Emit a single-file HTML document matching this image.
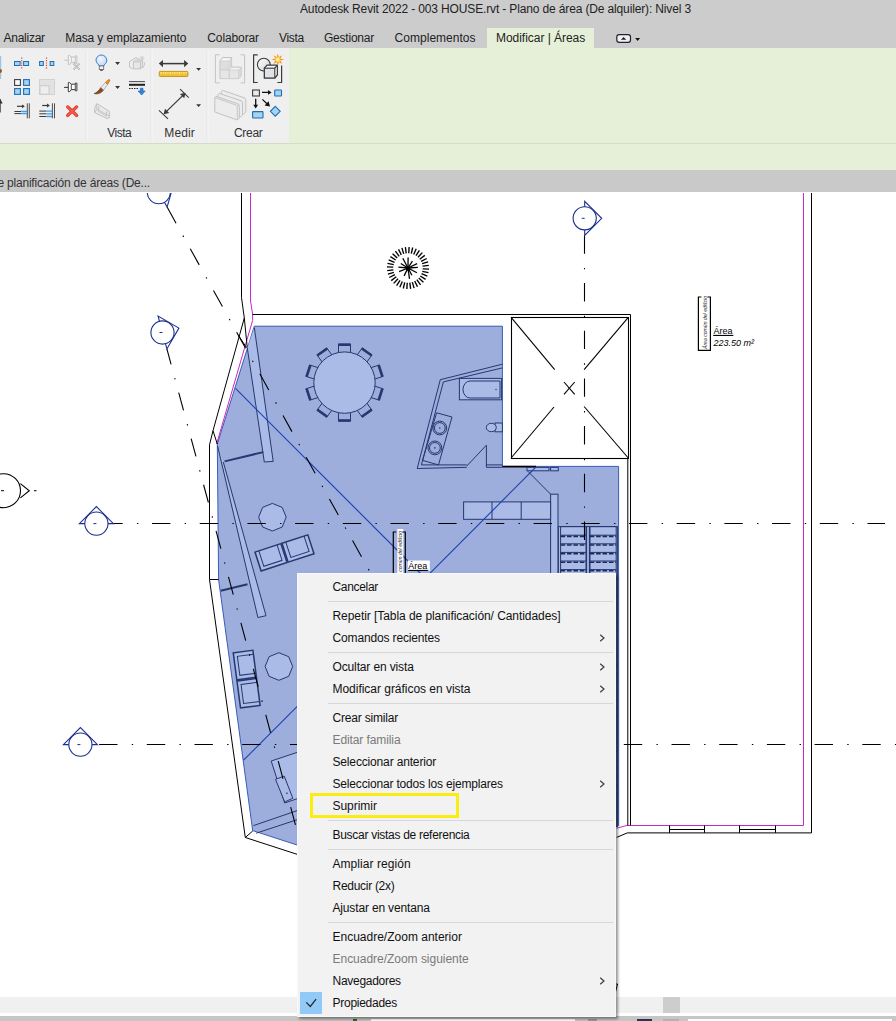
<!DOCTYPE html>
<html><head><meta charset="utf-8"><title>Autodesk Revit 2022</title>
<style>
*{margin:0;padding:0;box-sizing:border-box}
html,body{width:896px;height:1021px;overflow:hidden;background:#fff;font-family:"Liberation Sans",sans-serif;color:#1e1e1e}
#app{position:relative;width:896px;height:1021px;overflow:hidden;background:#fff}
.abs{position:absolute}
#titlebar{left:0;top:0;width:896px;height:48px;background:#cccccc}
#title{left:300px;top:1px;width:392px;height:16px;font-size:12px;line-height:16px;white-space:nowrap;color:#222}
.tab{position:absolute;top:29px;height:18px;line-height:18px;font-size:12px;white-space:nowrap;color:#222}
#acttab{left:487px;top:28px;width:107px;height:20px;background:#e6f0d8}
#ribbon{left:0;top:48px;width:896px;height:122px;background:#e6f0d8}
#panel{left:0;top:48px;width:289px;height:95px;background:#efefef}
#ribline{left:0;top:143px;width:896px;height:1px;background:#d3dcc6}
#viewtabs{left:0;top:170px;width:896px;height:21.6px;background:#c9c9c9}
#viewtab{top:173.6px;font-size:12px;line-height:18px;white-space:nowrap;color:#333}
.plabel{position:absolute;top:125px;white-space:nowrap;font-size:12px;line-height:16px;color:#333}
#canvas{left:0;top:191.6px;width:896px;height:806px;background:#fff}
#hscroll{left:0;top:997px;width:896px;height:15.8px;background:#f0f0f0}
#thumb{left:663px;top:997px;width:17px;height:15.8px;background:#cdcdcd}
#status{left:0;top:1015.5px;width:896px;height:6px;background:#c6c6c6}
#menu{left:297px;top:573px;width:319px;height:443.7px;background:#f2f2f2;border:1px solid #f9f9f9;box-shadow:2px 2px 2.5px rgba(0,0,0,.42)}
.mi{position:absolute;left:34.5px;height:22px;line-height:22px;font-size:12px;white-space:nowrap;color:#111}
.mi.dis{color:#7a7a7a}
.sep{position:absolute;left:30px;width:284.5px;height:1px;background:#d7d7d7}
.arr{position:absolute;left:300px;width:8px;height:10px}
</style></head><body><div id="app">
<div id="titlebar" class="abs"></div>
<div id="acttab" class="abs"></div>
<svg class="abs" style="left:612px;top:30px" width="32" height="16" viewBox="612 30 32 16"><rect x="616.8" y="34.7" width="13.7" height="7.6" rx="2.4" fill="#eef1f7" stroke="#222" stroke-width="1.2"/><path d="M620.9 39.7 L623.6 37 L626.3 39.7 Z" fill="#222"/><path d="M635.2 38.1 H640.1 L637.65 40.9 Z" fill="#111"/></svg>
<div id="ribbon" class="abs"></div>
<div id="panel" class="abs"></div>
<div id="ribline" class="abs"></div>
<svg class="abs" style="left:0;top:48px" width="290" height="95" viewBox="0 48 290 95" font-family="Liberation Sans, sans-serif">
<rect x="85.5" y="50" width="1" height="91" fill="#e4e4e4"/><rect x="86.5" y="50" width="1" height="91" fill="#f7f7f7"/>
<rect x="150.5" y="50" width="1" height="91" fill="#e4e4e4"/><rect x="151.5" y="50" width="1" height="91" fill="#f7f7f7"/>
<rect x="206.5" y="50" width="1" height="91" fill="#e4e4e4"/><rect x="207.5" y="50" width="1" height="91" fill="#f7f7f7"/>
<rect x="0" y="56" width="1.2" height="23" fill="#9cc4e8"/>
<circle cx="0" cy="71" r="2" fill="#9a5a0a"/>
<path d="M0 112.5 V99.5" stroke="#333" stroke-width="1.4" fill="none"/><path d="M0 98.6 L2.7 103.4 H0 Z" fill="#333"/>
<g transform="translate(14,55)">
<rect x="0.5" y="6.5" width="5.6" height="4" fill="#a5d3f3" stroke="#1f6fb5" stroke-width="1"/>
<rect x="9.6" y="6.5" width="5" height="4" fill="#a5d3f3" stroke="#1f6fb5" stroke-width="1"/>
<line x1="7.7" y1="2.6" x2="7.7" y2="14" stroke="#e0442f" stroke-width="1.2" stroke-dasharray="1.2 1.2"/>
</g>
<g transform="translate(39,55)">
<rect x="0.6" y="6.5" width="3.7" height="4" fill="#a5d3f3" stroke="#1f6fb5" stroke-width="1"/>
<rect x="11.1" y="6.5" width="3.7" height="4" fill="#a5d3f3" stroke="#1f6fb5" stroke-width="1"/>
<line x1="7.5" y1="2.6" x2="7.5" y2="14" stroke="#e0442f" stroke-width="1.2" stroke-dasharray="1.2 1.2"/>
</g>
<g transform="translate(64,51.8)">
<path d="M0.3 8.4 H4.1" stroke="#c2c2c2" stroke-width="1" fill="none"/>
<path d="M4.3 3.6 H5.7 L7.3 5.2 H11.3 V4.1 H12.9 V11.75 H11.3 V10.6 H7.3 L5.7 12.7 H4.3 Z" fill="#f1f1f1" stroke="#c2c2c2" stroke-width="1" stroke-linejoin="round"/>
<path d="M7.3 5.2 V10.6 M11.3 5.2 V10.6" stroke="#c2c2c2" stroke-width="0.9" fill="none"/>
</g>
<g transform="translate(64,55)">
<path d="M9.6 8.6 L15.5 14.5 M15.5 8.6 L9.6 14.5" stroke="#b4b4b4" stroke-width="2" fill="none" stroke-dasharray="1.2 0.6"/>
</g>
<g transform="translate(14,79)">
<rect x="0.6" y="0.6" width="5.8" height="5.8" fill="#fff" stroke="#3b3b3b" stroke-width="1.1"/>
<rect x="9.6" y="0.6" width="5.8" height="5.8" fill="#a5d3f3" stroke="#1f6fb5" stroke-width="1.1"/>
<rect x="0.6" y="9.6" width="5.8" height="5.8" fill="#a5d3f3" stroke="#1f6fb5" stroke-width="1.1"/>
<rect x="9.6" y="9.6" width="5.8" height="5.8" fill="#a5d3f3" stroke="#1f6fb5" stroke-width="1.1"/>
</g>
<g transform="translate(39,79)">
<rect x="0.5" y="0.5" width="15" height="15" fill="#e2e2e2" stroke="#d2d2d2" stroke-width="1"/>
<rect x="1" y="6.8" width="9" height="8.4" fill="#efefef" stroke="#c9c9c9" stroke-width="1"/>
</g>
<g transform="translate(64,79)">
<path d="M0.1 8.4 H4.1" stroke="#3b3b3b" stroke-width="1.1" fill="none"/>
<path d="M4.3 3.6 H5.7 L7.3 5.2 H11.3 V4.1 H12.9 V11.75 H11.3 V10.6 H7.3 L5.7 12.7 H4.3 Z" fill="#fdfdfd" stroke="#3b3b3b" stroke-width="1" stroke-linejoin="round"/>
<path d="M7.3 5.2 V10.6 M11.3 5.2 V10.6" stroke="#3b3b3b" stroke-width="0.9" fill="none"/>
</g>
<g transform="translate(14,103)">
<path d="M3 3.3 H10" stroke="#3b3b3b" stroke-width="1.2" fill="none"/><path d="M8 1.4 L10.8 3.3 L8 5.2 Z" fill="#3b3b3b"/>
<path d="M13.3 0.3 V15.3 M15.3 0.3 V15.3" stroke="#3b3b3b" stroke-width="0.9" fill="none"/>
<path d="M0.4 8.5 H7.2 M0.4 10.6 H7.2" stroke="#3b3b3b" stroke-width="1" fill="none"/>
<path d="M7.2 8.5 H13 M7.2 10.6 H13" stroke="#3f9fea" stroke-width="1.3" fill="none"/>
</g>
<g transform="translate(39,103)">
<path d="M3.2 2.5 H10" stroke="#3b3b3b" stroke-width="1.2" fill="none"/><path d="M8 0.6 L10.8 2.5 L8 4.4 Z" fill="#3b3b3b"/>
<path d="M13.4 0.3 V15.3 M15.5 0.3 V15.3" stroke="#3b3b3b" stroke-width="0.9" fill="none"/>
<path d="M0.3 8.1 H7.4 M0.3 10.8 H7.4 M0.3 13.5 H7.4" stroke="#3b3b3b" stroke-width="1" fill="none"/>
<path d="M7.4 8.1 H13.1 M7.4 10.8 H13.1 M7.4 13.5 H13.1" stroke="#3f9fea" stroke-width="1.3" fill="none"/>
</g>
<g transform="translate(64,103)">
<path d="M3.7 3.9 L12.6 12.4 M12.6 3.9 L3.7 12.4" stroke="#c8301f" stroke-width="3.3" stroke-linecap="round" fill="none"/>
<path d="M3.7 3.9 L12.6 12.4 M12.6 3.9 L3.7 12.4" stroke="#f7574a" stroke-width="2.1" stroke-linecap="round" fill="none"/>
</g>
<g transform="translate(93,55)">
<defs><radialGradient id="bg" cx="40%" cy="35%" r="70%"><stop offset="0" stop-color="#f4f9ff"/><stop offset="1" stop-color="#bcd6f5"/></radialGradient></defs>
<path d="M6.2 11 C6.2 9.5 3 8.3 3 5.4 A5.4 5.4 0 0 1 13.8 5.4 C13.8 8.3 10.7 9.5 10.7 11 Z" fill="url(#bg)" stroke="#3b78cf" stroke-width="1"/>
<rect x="6.3" y="11" width="4.4" height="3.4" fill="#f2f2f2" stroke="#666" stroke-width="0.8"/>
<path d="M6.8 14.8 H10.2 L9.6 15.8 H7.4 Z" fill="#333"/>
</g>
<path d="M115.1 62 H120 L117.55 65 Z" fill="#333"/>
<path d="M115.1 86 H120 L117.55 89 Z" fill="#333"/>
<g transform="translate(129,55)">
<path d="M0.5 6.5 L7 2.5 L11 5 M0.5 6.5 V12 L3.5 13.8 M15.3 7 V10.5 L13.5 13" fill="none" stroke="#c2c2c2" stroke-width="1"/>
<rect x="4.3" y="6.8" width="7.3" height="7" fill="#e6e6e6" stroke="#c2c2c2" stroke-width="1"/>
<path d="M4.3 6.8 L6.3 5 H13.4 L11.6 6.8 M13.4 5 V11.8 L11.6 13.8" fill="none" stroke="#c2c2c2" stroke-width="1"/>
<path d="M13 0.6 V5.4 M10.6 3 H15.4 M11.3 1.3 L14.7 4.7 M14.7 1.3 L11.3 4.7" fill="none" stroke="#cfcfcf" stroke-width="0.9"/>
</g>
<g transform="translate(94,79)">
<path d="M0 14.5 C2.6 14 5 11.5 6.8 8.6 L9.6 10.8 C7.6 14.4 3.4 15.6 0 14.5 Z" fill="#8a4a1c" stroke="#6b3410" stroke-width="0.6"/>
<path d="M6.8 8.6 L11.4 3.4 L13.6 5.4 L9.6 10.9 Z" fill="#ececec" stroke="#8c8c8c" stroke-width="0.6"/>
<path d="M11.4 3.4 L14.3 0.7 C15.3 0 16.4 1 15.7 2.1 L13.6 5.4 Z" fill="#ea8d23" stroke="#b5630f" stroke-width="0.6"/>
</g>
<g transform="translate(129,80)">
<path d="M0 1.6 H16" stroke="#3b3b3b" stroke-width="0.9"/><path d="M0 4.8 H16" stroke="#222" stroke-width="2"/><path d="M0 8.5 H10" stroke="#222" stroke-width="1" stroke-dasharray="1.5 1"/>
<path d="M11.3 8.2 H14 V11 H16.2 L12.65 15 L9.1 11 H11.3 Z" fill="#2b86e0" stroke="#1661b5" stroke-width="0.6"/>
</g>
<g transform="translate(94,103)">
<path d="M0.6 5.2 L2.8 0.6 L15.4 8.3 V14.6 L13 15.6 L0.6 9.6 Z" fill="#e9e9e9" stroke="#c2c2c2" stroke-width="1"/>
<path d="M2.8 0.6 V6.2 L0.6 9.6 M2.8 6.2 L15.4 13 M4.6 3.4 V8.6 L12.6 13.2 V8.4" fill="none" stroke="#c2c2c2" stroke-width="0.9"/>
</g>
<path d="M161 63.6 H186" stroke="#3b3b3b" stroke-width="1.5" fill="none"/>
<path d="M158.8 63.6 L163 60 V67.2 Z M188.3 63.6 L184.1 60 V67.2 Z" fill="#3b3b3b"/>
<rect x="159.3" y="71.4" width="28.6" height="5" rx="0.8" fill="#f3c532" stroke="#c3931a" stroke-width="1"/>
<path d="M161 71.9 V74 M163.3 71.9 V73.2 M165.6 71.9 V74 M167.9 71.9 V73.2 M170.2 71.9 V74 M172.5 71.9 V73.2 M174.8 71.9 V74 M177.1 71.9 V73.2 M179.4 71.9 V74 M181.7 71.9 V73.2 M184 71.9 V74 M186.3 71.9 V73.2" stroke="#fbe9a8" stroke-width="1" fill="none"/>
<path d="M196.2 68.1 H201 L198.6 70.8 Z" fill="#333"/>
<path d="M196.2 104.2 H201 L198.6 106.9 Z" fill="#333"/>
<path d="M165.2 112.6 L184 94.4" stroke="#3b3b3b" stroke-width="1.3" fill="none"/>
<path d="M159 110.3 L168 118.8 M180.1 89.2 L188.7 97.7" stroke="#3b3b3b" stroke-width="1.1" fill="none"/>
<path d="M163.6 114.2 L165 108.8 L169.2 113 Z M185.6 92.8 L184.2 98.2 L180 94 Z" fill="#3b3b3b"/>
<path d="M219.6 54.8 H215.4 V82.9 H219.6 M240.6 54.8 H244.6 V82.9 H240.6" fill="none" stroke="#c2c2c2" stroke-width="1"/>
<path d="M220.1 61.1 L222.6 57.5 H231.6 V67.1 H241.2 V76.1 L238.6 78.6 H220.1 Z" fill="#f3f3f3" stroke="#c2c2c2" stroke-width="1" stroke-linejoin="round"/>
<rect x="220.1" y="61.1" width="9" height="8.6" fill="#dedede" stroke="#cdcdcd" stroke-width="0.8"/>
<rect x="220.1" y="70" width="9" height="8.6" fill="#e6e6e6" stroke="#cdcdcd" stroke-width="0.8"/>
<rect x="229.6" y="70" width="9" height="8.6" fill="#e6e6e6" stroke="#cdcdcd" stroke-width="0.8"/>
<path d="M229.1 61.1 L231.6 57.5 M229.1 69.7 L231.6 67.1 M238.6 70 L241.2 67.1" fill="none" stroke="#cdcdcd" stroke-width="0.8"/>
<path d="M229.3 61.4 L231.4 58.4 V66.9 L229.3 69.5 Z M238.8 70.3 L241 67.8 V75.9 L238.8 78.3 Z" fill="#d8d8d8"/>
<path d="M257.7 54.8 H253.6 V82.5 H257.7 M281.6 65.4 V82.5 H277.4" fill="none" stroke="#3b3b3b" stroke-width="1.2"/>
<defs><linearGradient id="cg" x1="0" y1="0" x2="1" y2="1"><stop offset="0" stop-color="#ffffff"/><stop offset="1" stop-color="#cfd3d8"/></linearGradient></defs>
<circle cx="263.8" cy="64.6" r="6.4" fill="url(#cg)" stroke="#3b3b3b" stroke-width="1.1"/>
<path d="M264.4 68.2 L267 65.2 H277.4 V75 L274.8 78 H264.4 Z" fill="#f4f5f7" stroke="#3b3b3b" stroke-width="1.2" stroke-linejoin="round"/>
<rect x="264.4" y="68.2" width="10.4" height="9.8" fill="#dfe2e6" stroke="#3b3b3b" stroke-width="1.1"/>
<path d="M274.8 68.2 L277.4 65.2" stroke="#3b3b3b" stroke-width="1.1"/>
<polygon points="277.8,53.4 278.8,57.2 282.2,55.2 280.2,58.6 284.0,59.6 280.2,60.6 282.2,64.0 278.8,62.0 277.8,65.8 276.8,62.0 273.4,64.0 275.4,60.6 271.6,59.6 275.4,58.6 273.4,55.2 276.8,57.2" fill="#f08a1c"/>
<circle cx="277.8" cy="59.6" r="2.8" fill="#ffd23a"/><circle cx="277.8" cy="59.6" r="1.4" fill="#fff6c2"/>
<path d="M221.3 91.5 L222.5 90.3 L244.8 98.0 L245.8 99.5 V112.0 L243.8 114.0 L221.3 106.0 Z" fill="#ececec" stroke="#c2c2c2" stroke-width="1"/>
<path d="M218.0 94.5 L219.2 93.3 L241.5 101.0 L242.5 102.5 V115.0 L240.5 117.0 L218.0 109.0 Z" fill="#ececec" stroke="#c2c2c2" stroke-width="1"/>
<path d="M214.8 97.5 L216.0 96.3 L238.3 104.0 L239.3 105.5 V118.0 L237.3 120.0 L214.8 112.0 Z" fill="#ececec" stroke="#c2c2c2" stroke-width="1"/>
<path d="M214.8 97.5 L237.3 105.5 V120 M237.3 105.5 L239.3 104" fill="none" stroke="#c2c2c2" stroke-width="0.9"/>
<rect x="252.6" y="90" width="6.8" height="6" fill="#e8eaee" stroke="#3b3b3b" stroke-width="1.1"/>
<rect x="274.7" y="90" width="6.8" height="6" rx="0.6" fill="#a5d3f3" stroke="#1f6fb5" stroke-width="1.1"/>
<rect x="252.6" y="111.6" width="10.4" height="6.4" rx="0.6" fill="#a5d3f3" stroke="#1f6fb5" stroke-width="1.1"/>
<path d="M275.3 106.4 L280.2 111.3 L275.3 116.2 L270.4 111.3 Z" fill="#a5d3f3" stroke="#1f6fb5" stroke-width="1.1"/>
<path d="M262 92.4 H269 M255.7 98.7 V105.5 M262.4 99.4 L267.5 104.2" stroke="#111" stroke-width="1.3" fill="none"/>
<path d="M271.6 92.4 L268 90 V94.8 Z M255.7 108.6 L253.3 104.8 H258.1 Z M270 106.6 L264.6 105.4 L268.6 101.2 Z" fill="#111"/>
</svg>
<div id="viewtabs" class="abs"></div>
<div id="title" class="abs" style="left:300px;letter-spacing:-0.142px">Autodesk Revit 2022 - 003 HOUSE.rvt - Plano de área (De alquiler): Nivel 3</div>
<div class="tab" style="left:3.5px;letter-spacing:-0.257px">Analizar</div>
<div class="tab" style="left:65.3px;letter-spacing:-0.12px">Masa y emplazamiento</div>
<div class="tab" style="left:207.3px;letter-spacing:-0.111px">Colaborar</div>
<div class="tab" style="left:279px;letter-spacing:-0.294px">Vista</div>
<div class="tab" style="left:324px;letter-spacing:-0.226px">Gestionar</div>
<div class="tab" style="left:394.6px;letter-spacing:0.025px">Complementos</div>
<div class="tab" style="left:496px;letter-spacing:-0.036px">Modificar | Áreas</div>
<div class="plabel" style="left:107.3px;letter-spacing:-0.494px">Vista</div>
<div class="plabel" style="left:164.3px;letter-spacing:0.137px">Medir</div>
<div class="plabel" style="left:234px;letter-spacing:-0.303px">Crear</div>
<div id="viewtab" class="abs" style="left:-2.6px;letter-spacing:-0.199px">e planificación de áreas (De...</div>
<div id="canvas" class="abs"></div>
<svg class="abs" id="drawing" style="left:0;top:193px" width="896" height="804" viewBox="0 193 896 804" font-family="Liberation Sans, sans-serif" shape-rendering="auto">
<polygon points="254.3,326.2 502.4,326.2 502.4,466.4 618.6,466.4 618.6,826.0 600.0,826.0 298.0,845.3 252.7,830.6 218.6,579.6 217.3,444.0" stroke="none" stroke-width="1" fill="#9daedd" />
<polyline points="618.6,826.0 618.6,466.4 502.4,466.4 502.4,326.2 254.3,326.2 217.3,444.0 218.6,579.6 252.7,830.6 298.0,845.3" stroke="#3b5bb8" stroke-width="1" fill="none" />
<polyline points="250.5,193.0 250.5,301.0 252.6,314.0 252.6,320.5 246.4,341.7 216.6,444.0" stroke="#c42ac4" stroke-width="1" fill="none" />
<polyline points="803.5,193.0 803.5,825.5 626.8,825.5 616.7,828.2" stroke="#c42ac4" stroke-width="1" fill="none" />
<polyline points="241.5,193.0 241.5,297.6 244.3,318.0 213.0,430.7 209.5,444.8 209.5,579.5 245.3,837.5 298.0,854.6" stroke="#000" stroke-width="1" fill="none" />
<polyline points="244.3,318.0 247.3,348.0" stroke="#000" stroke-width="1" fill="none" />
<polyline points="238.5,335.5 246.5,347.5" stroke="#000" stroke-width="1" fill="none" />
<polyline points="213.0,430.7 217.3,444.0" stroke="#000" stroke-width="1" fill="none" />
<polyline points="209.5,579.5 218.6,579.5" stroke="#000" stroke-width="1" fill="none" />
<polyline points="245.3,837.5 252.7,831.0" stroke="#000" stroke-width="1" fill="none" />
<polyline points="252.6,314.5 630.5,314.5 630.5,825.5" stroke="#000" stroke-width="1" fill="none" />
<polyline points="811.5,193.0 811.5,832.9 627.3,832.9 616.7,837.4" stroke="#000" stroke-width="1" fill="none" />
<line x1="627.8" y1="458.0" x2="627.8" y2="825.5" stroke="#000" stroke-width="1" />
<polyline points="669.5,825.5 669.5,832.9" stroke="#000" stroke-width="1" fill="none" />
<polyline points="704.5,825.5 704.5,832.9" stroke="#000" stroke-width="1" fill="none" />
<line x1="669.5" y1="829.5" x2="704.5" y2="829.5" stroke="#000" stroke-width="1" />
<polyline points="739.5,825.5 739.5,832.9" stroke="#000" stroke-width="1" fill="none" />
<polyline points="775.5,825.5 775.5,832.9" stroke="#000" stroke-width="1" fill="none" />
<line x1="739.5" y1="829.5" x2="775.5" y2="829.5" stroke="#000" stroke-width="1" />
<rect x="511.5" y="317.5" width="117" height="141" fill="#fff" stroke="#000" stroke-width="1.1"/>
<line x1="511.1" y1="317.4" x2="554.7" y2="369.6" stroke="#000" stroke-width="1.1" />
<line x1="628.3" y1="317.4" x2="584.1" y2="369.6" stroke="#000" stroke-width="1.1" />
<line x1="511.1" y1="458.0" x2="554.0" y2="407.0" stroke="#000" stroke-width="1.1" />
<line x1="628.3" y1="458.0" x2="584.1" y2="406.5" stroke="#000" stroke-width="1.1" />
<line x1="564.0" y1="382.0" x2="574.7" y2="394.4" stroke="#000" stroke-width="1.1" />
<line x1="574.7" y1="382.0" x2="564.0" y2="394.4" stroke="#000" stroke-width="1.1" />
<line x1="502.4" y1="466.6" x2="536.0" y2="466.6" stroke="#000" stroke-width="1.6" />
<polyline points="247.3,348.0 264.3,462.0 273.2,461.4 254.3,327.6" stroke="#25386f" stroke-width="1" fill="#a9bbe6" />
<line x1="224.6" y1="461.4" x2="263.3" y2="452.1" stroke="#25386f" stroke-width="2" />
<polyline points="217.6,446.0 257.9,617.5 266.0,615.7 223.3,462.0" stroke="#25386f" stroke-width="1" fill="#a9bbe6" />
<line x1="220.7" y1="590.7" x2="247.5" y2="584.3" stroke="#25386f" stroke-width="2" />
<polyline points="338.5,352.9 338.5,343.9 350.5,343.9 350.5,352.9" stroke="#25386f" stroke-width="1" fill="none" />
<polyline points="338.3,344.9 350.7,344.9" stroke="#25386f" stroke-width="2.2" fill="none" />
<polyline points="357.1,355.0 362.4,347.8 372.1,354.8 366.8,362.1" stroke="#25386f" stroke-width="1" fill="none" />
<polyline points="361.6,348.5 371.7,355.7" stroke="#25386f" stroke-width="2.2" fill="none" />
<polyline points="370.9,367.7 379.5,364.9 383.2,376.3 374.6,379.1" stroke="#25386f" stroke-width="1" fill="none" />
<polyline points="378.4,365.1 382.3,376.8" stroke="#25386f" stroke-width="2.2" fill="none" />
<polyline points="374.6,386.1 383.2,388.9 379.5,400.3 370.9,397.5" stroke="#25386f" stroke-width="1" fill="none" />
<polyline points="382.3,388.4 378.4,400.1" stroke="#25386f" stroke-width="2.2" fill="none" />
<polyline points="366.8,403.1 372.1,410.4 362.4,417.4 357.1,410.2" stroke="#25386f" stroke-width="1" fill="none" />
<polyline points="371.7,409.5 361.6,416.7" stroke="#25386f" stroke-width="2.2" fill="none" />
<polyline points="350.5,412.3 350.5,421.3 338.5,421.3 338.5,412.3" stroke="#25386f" stroke-width="1" fill="none" />
<polyline points="350.7,420.3 338.3,420.3" stroke="#25386f" stroke-width="2.2" fill="none" />
<polyline points="331.9,410.2 326.6,417.4 316.9,410.4 322.2,403.1" stroke="#25386f" stroke-width="1" fill="none" />
<polyline points="327.4,416.7 317.3,409.5" stroke="#25386f" stroke-width="2.2" fill="none" />
<polyline points="318.1,397.5 309.5,400.3 305.8,388.9 314.4,386.1" stroke="#25386f" stroke-width="1" fill="none" />
<polyline points="310.6,400.1 306.7,388.4" stroke="#25386f" stroke-width="2.2" fill="none" />
<polyline points="314.4,379.1 305.8,376.3 309.5,364.9 318.1,367.7" stroke="#25386f" stroke-width="1" fill="none" />
<polyline points="306.7,376.8 310.6,365.1" stroke="#25386f" stroke-width="2.2" fill="none" />
<polyline points="322.2,362.1 316.9,354.8 326.6,347.8 331.9,355.0" stroke="#25386f" stroke-width="1" fill="none" />
<polyline points="317.3,355.7 327.4,348.5" stroke="#25386f" stroke-width="2.2" fill="none" />
<circle cx="344.5" cy="382.6" r="30.7" fill="#a9bbe6" stroke="#25386f" stroke-width="1"/>
<polyline points="502.4,364.2 440.3,379.7 417.2,468.5 466.8,467.3" stroke="#25386f" stroke-width="1" fill="none" />
<polyline points="502.4,367.9 443.4,381.9 421.4,464.9 466.8,464.9" stroke="#25386f" stroke-width="1" fill="none" />
<polyline points="466.8,466.0 486.4,445.2 486.4,467.3 502.4,467.3" stroke="#25386f" stroke-width="1" fill="none" />
<line x1="486.4" y1="464.9" x2="502.4" y2="464.9" stroke="#25386f" stroke-width="1" />
<rect x="459.4" y="378.4" width="42.2" height="21.4" fill="#a9bbe6" stroke="#25386f" stroke-width="1"/>
<path d="M500 381 H470 A7 8.5 0 0 0 470 398 H500 Z" fill="#a9bbe6" stroke="#25386f" stroke-width="1"/>
<circle cx="496" cy="389.5" r="0.7" fill="#25386f"/>
<polygon points="436.6,412.8 452.0,417.0 438.5,464.9 422.6,460.4" stroke="#25386f" stroke-width="1" fill="none" />
<circle cx="439.8" cy="428" r="6.9" fill="none" stroke="#25386f" stroke-width="1"/>
<circle cx="439.8" cy="428" r="5.4" fill="none" stroke="#25386f" stroke-width="1"/>
<circle cx="439.8" cy="428" r="0.8" fill="#25386f"/>
<circle cx="434.9" cy="447.9" r="6.9" fill="none" stroke="#25386f" stroke-width="1"/>
<circle cx="434.9" cy="447.9" r="5.4" fill="none" stroke="#25386f" stroke-width="1"/>
<circle cx="434.9" cy="447.9" r="0.8" fill="#25386f"/>
<rect x="495" y="423" width="7.4" height="8.8" fill="#a9bbe6" stroke="#25386f" stroke-width="1"/>
<ellipse cx="491.3" cy="427.5" rx="5" ry="4.2" fill="#a9bbe6" stroke="#25386f" stroke-width="1"/>
<rect x="527" y="467.4" width="22" height="3.4" fill="#a9bbe6" stroke="#25386f" stroke-width="1"/>
<rect x="550.6" y="467.4" width="7.7" height="3.4" fill="#a9bbe6" stroke="#25386f" stroke-width="1"/>
<line x1="528.0" y1="471.4" x2="550.6" y2="494.2" stroke="#25386f" stroke-width="1" />
<rect x="550.6" y="494.2" width="7.4" height="335" fill="#a9bbe6" stroke="#25386f" stroke-width="1"/>
<rect x="463.6" y="501.9" width="87" height="17.4" fill="#a9bbe6" stroke="#25386f" stroke-width="1"/>
<line x1="492.0" y1="501.9" x2="492.0" y2="519.3" stroke="#25386f" stroke-width="1" />
<line x1="521.2" y1="501.9" x2="521.2" y2="519.3" stroke="#25386f" stroke-width="1" />
<rect x="558.4" y="526.6" width="59" height="300" fill="#a9bbe6" stroke="#25386f" stroke-width="1"/>
<line x1="560.6" y1="526.6" x2="560.6" y2="826.0" stroke="#25386f" stroke-width="1" />
<line x1="616.2" y1="526.6" x2="616.2" y2="826.0" stroke="#25386f" stroke-width="1" />
<line x1="586.3" y1="526.6" x2="586.3" y2="826.0" stroke="#25386f" stroke-width="1.6" />
<line x1="589.7" y1="526.6" x2="589.7" y2="826.0" stroke="#25386f" stroke-width="1.6" />
<path d="M560.6 526.6 H586.3 M589.7 526.6 H616.2 M560.6 535.2 H586.3 M589.7 535.2 H616.2 M560.6 543.8 H586.3 M589.7 543.8 H616.2 M560.6 552.4 H586.3 M589.7 552.4 H616.2 M560.6 561.0 H586.3 M589.7 561.0 H616.2 M560.6 569.6 H586.3 M589.7 569.6 H616.2 M560.6 578.2 H586.3 M589.7 578.2 H616.2 M560.6 586.8 H586.3 M589.7 586.8 H616.2 M560.6 595.4 H586.3 M589.7 595.4 H616.2 M560.6 604.0 H586.3 M589.7 604.0 H616.2 M560.6 612.6 H586.3 M589.7 612.6 H616.2 M560.6 621.2 H586.3 M589.7 621.2 H616.2 M560.6 629.8 H586.3 M589.7 629.8 H616.2 M560.6 638.4 H586.3 M589.7 638.4 H616.2 M560.6 647.0 H586.3 M589.7 647.0 H616.2 M560.6 655.6 H586.3 M589.7 655.6 H616.2 M560.6 664.2 H586.3 M589.7 664.2 H616.2 M560.6 672.8 H586.3 M589.7 672.8 H616.2 M560.6 681.4 H586.3 M589.7 681.4 H616.2 M560.6 690.0 H586.3 M589.7 690.0 H616.2 M560.6 698.6 H586.3 M589.7 698.6 H616.2 M560.6 707.2 H586.3 M589.7 707.2 H616.2 M560.6 715.8 H586.3 M589.7 715.8 H616.2 M560.6 724.4 H586.3 M589.7 724.4 H616.2 M560.6 733.0 H586.3 M589.7 733.0 H616.2 M560.6 741.6 H586.3 M589.7 741.6 H616.2 M560.6 750.2 H586.3 M589.7 750.2 H616.2 M560.6 758.8 H586.3 M589.7 758.8 H616.2 M560.6 767.4 H586.3 M589.7 767.4 H616.2 M560.6 776.0 H586.3 M589.7 776.0 H616.2 M560.6 784.6 H586.3 M589.7 784.6 H616.2 M560.6 793.2 H586.3 M589.7 793.2 H616.2 M560.6 801.8 H586.3 M589.7 801.8 H616.2 M560.6 810.4 H586.3 M589.7 810.4 H616.2 M560.6 819.0 H586.3 M589.7 819.0 H616.2" stroke="#25386f" stroke-width="1" fill="none"/>
<path d="M560.6 536.4 H586.3 M589.7 536.4 H616.2 M560.6 545.0 H586.3 M589.7 545.0 H616.2 M560.6 553.6 H586.3 M589.7 553.6 H616.2 M560.6 562.2 H586.3 M589.7 562.2 H616.2 M560.6 570.8 H586.3 M589.7 570.8 H616.2 M560.6 579.4 H586.3 M589.7 579.4 H616.2 M560.6 588.0 H586.3 M589.7 588.0 H616.2 M560.6 596.6 H586.3 M589.7 596.6 H616.2 M560.6 605.2 H586.3 M589.7 605.2 H616.2 M560.6 613.8 H586.3 M589.7 613.8 H616.2 M560.6 622.4 H586.3 M589.7 622.4 H616.2 M560.6 631.0 H586.3 M589.7 631.0 H616.2 M560.6 639.6 H586.3 M589.7 639.6 H616.2 M560.6 648.2 H586.3 M589.7 648.2 H616.2 M560.6 656.8 H586.3 M589.7 656.8 H616.2 M560.6 665.4 H586.3 M589.7 665.4 H616.2 M560.6 674.0 H586.3 M589.7 674.0 H616.2 M560.6 682.6 H586.3 M589.7 682.6 H616.2 M560.6 691.2 H586.3 M589.7 691.2 H616.2 M560.6 699.8 H586.3 M589.7 699.8 H616.2 M560.6 708.4 H586.3 M589.7 708.4 H616.2 M560.6 717.0 H586.3 M589.7 717.0 H616.2 M560.6 725.6 H586.3 M589.7 725.6 H616.2 M560.6 734.2 H586.3 M589.7 734.2 H616.2 M560.6 742.8 H586.3 M589.7 742.8 H616.2 M560.6 751.4 H586.3 M589.7 751.4 H616.2 M560.6 760.0 H586.3 M589.7 760.0 H616.2 M560.6 768.6 H586.3 M589.7 768.6 H616.2 M560.6 777.2 H586.3 M589.7 777.2 H616.2 M560.6 785.8 H586.3 M589.7 785.8 H616.2 M560.6 794.4 H586.3 M589.7 794.4 H616.2 M560.6 803.0 H586.3 M589.7 803.0 H616.2 M560.6 811.6 H586.3 M589.7 811.6 H616.2 M560.6 820.2 H586.3 M589.7 820.2 H616.2" stroke="#1d2a5c" stroke-width="1.6" fill="none" stroke-dasharray="4.6 1.8"/>
<polygon points="286.2,517.2 282.2,527.0 272.4,531.0 262.6,527.0 258.6,517.2 262.6,507.4 272.4,503.4 282.2,507.4" stroke="#25386f" stroke-width="1" fill="#a9bbe6" />
<polygon points="292.7,666.5 288.7,676.3 278.9,680.3 269.1,676.3 265.1,666.5 269.1,656.7 278.9,652.7 288.7,656.7" stroke="#25386f" stroke-width="1" fill="#a9bbe6" />
<g transform="translate(284.5,552.9) rotate(-18.1)" stroke="#25386f" fill="#a9bbe6">
<rect x="-27.8" y="-9.9" width="27.2" height="19.8" stroke-width="1.5"/>
<path d="M-23.8 -9.9 V6.3 H-4.6 V-9.9" fill="none" stroke-width="1"/>
<rect x="0.6" y="-9.9" width="27.2" height="19.8" stroke-width="1.5"/>
<path d="M4.6 -9.9 V6.3 H23.8 V-9.9" fill="none" stroke-width="1"/>
</g>
<g transform="translate(246.7,679.1) rotate(82.5)" stroke="#25386f" fill="#a9bbe6">
<rect x="-27.8" y="-9.9" width="27.2" height="19.8" stroke-width="1.5"/>
<path d="M-23.8 -9.9 V6.3 H-4.6 V-9.9" fill="none" stroke-width="1"/>
<rect x="0.6" y="-9.9" width="27.2" height="19.8" stroke-width="1.5"/>
<path d="M4.6 -9.9 V6.3 H23.8 V-9.9" fill="none" stroke-width="1"/>
</g>
<polyline points="298.0,752.1 271.2,761.0 284.7,803.0 298.0,798.4" stroke="#25386f" stroke-width="1" fill="#a9bbe6" />
<polygon points="275.5,779.3 284.2,776.1 292.8,798.2 284.7,802.0" stroke="#25386f" stroke-width="1" fill="#a9bbe6" />
<polyline points="253.5,825.6 298.0,810.3" stroke="#25386f" stroke-width="1" fill="none" />
<polyline points="256.2,833.2 298.0,819.4" stroke="#25386f" stroke-width="1" fill="none" />
<line x1="235.5" y1="388.4" x2="425.0" y2="578.0" stroke="#1f3fb4" stroke-width="1.1" />
<line x1="535.6" y1="467.4" x2="243.6" y2="760.1" stroke="#1f3fb4" stroke-width="1.1" />
<line x1="167.1" y1="207.1" x2="555.9" y2="906.3" stroke="#000" stroke-width="1.1" stroke-dasharray="18.4 14.25 1.4 13.65" stroke-dashoffset="0.00"/>
<line x1="166.9" y1="348.9" x2="302.5" y2="850.9" stroke="#000" stroke-width="1.1" stroke-dasharray="18.4 14.25 1.4 13.65" stroke-dashoffset="2.40"/>
<line x1="113.4" y1="523.5" x2="885.0" y2="523.5" stroke="#000" stroke-width="1.1" stroke-dasharray="18.4 14.25 1.4 13.65" stroke-dashoffset="9.10"/>
<line x1="97.4" y1="744.5" x2="896.0" y2="744.5" stroke="#000" stroke-width="1.1" stroke-dasharray="18.4 14.25 1.4 13.65" stroke-dashoffset="46.00"/>
<line x1="584.5" y1="235.3" x2="584.5" y2="540.5" stroke="#000" stroke-width="1.1" stroke-dasharray="18.4 14.25 1.4 13.65" stroke-dashoffset="0.00"/>
<circle cx="158.8" cy="192.2" r="11.6" stroke="#1c2f8c" fill="none" stroke-width="1.1"/>
<polyline points="153.2,182.1 150.5,177.3 173.7,183.9 167.1,207.1 164.4,202.3" stroke="#1c2f8c" stroke-width="1.1" fill="none" />
<line x1="155.8" y1="192.2" x2="158.8" y2="192.2" stroke="#1c2f8c" stroke-width="1" />
<circle cx="162.5" cy="332.5" r="11.6" stroke="#1c2f8c" fill="none" stroke-width="1.1"/>
<polyline points="159.5,321.3 158.1,316.1 178.9,328.1 166.9,348.9 165.5,343.7" stroke="#1c2f8c" stroke-width="1.1" fill="none" />
<line x1="159.5" y1="332.5" x2="162.5" y2="332.5" stroke="#1c2f8c" stroke-width="1" />
<circle cx="96.4" cy="523.6" r="11.6" stroke="#1c2f8c" fill="none" stroke-width="1.1"/>
<polyline points="84.8,523.6 79.4,523.6 96.4,506.6 113.4,523.6 108.0,523.6" stroke="#1c2f8c" stroke-width="1.1" fill="none" />
<line x1="93.4" y1="523.6" x2="96.4" y2="523.6" stroke="#1c2f8c" stroke-width="1" />
<circle cx="80.4" cy="744.6" r="11.6" stroke="#1c2f8c" fill="none" stroke-width="1.1"/>
<polyline points="68.8,744.6 63.4,744.6 80.4,727.6 97.4,744.6 92.0,744.6" stroke="#1c2f8c" stroke-width="1.1" fill="none" />
<line x1="77.4" y1="744.6" x2="80.4" y2="744.6" stroke="#1c2f8c" stroke-width="1" />
<circle cx="584.7" cy="218.3" r="11.6" stroke="#1c2f8c" fill="none" stroke-width="1.1"/>
<polyline points="584.7,206.7 584.7,201.3 601.7,218.3 584.7,235.3 584.7,229.9" stroke="#1c2f8c" stroke-width="1.1" fill="none" />
<line x1="581.7" y1="218.3" x2="584.7" y2="218.3" stroke="#1c2f8c" stroke-width="1" />
<circle cx="3.5" cy="490.7" r="17" fill="none" stroke="#000" stroke-width="1.1"/>
<polyline points="20.4,483.6 29.3,490.7 20.4,497.9" stroke="#000" stroke-width="1.1" fill="none" />
<line x1="1.0" y1="490.7" x2="4.0" y2="490.7" stroke="#000" stroke-width="1" />
<line x1="34.0" y1="490.7" x2="36.5" y2="490.7" stroke="#000" stroke-width="1" />
<line x1="422.7" y1="268.8" x2="429.0" y2="269.1" stroke="#000" stroke-width="1.35" />
<line x1="422.3" y1="271.3" x2="428.5" y2="272.7" stroke="#000" stroke-width="1.35" />
<line x1="421.5" y1="273.7" x2="427.3" y2="276.2" stroke="#000" stroke-width="1.35" />
<line x1="420.3" y1="276.0" x2="425.6" y2="279.4" stroke="#000" stroke-width="1.35" />
<line x1="418.8" y1="278.0" x2="423.4" y2="282.3" stroke="#000" stroke-width="1.35" />
<line x1="416.8" y1="279.7" x2="420.6" y2="284.8" stroke="#000" stroke-width="1.35" />
<line x1="414.7" y1="281.1" x2="417.5" y2="286.7" stroke="#000" stroke-width="1.35" />
<line x1="412.3" y1="282.1" x2="414.1" y2="288.1" stroke="#000" stroke-width="1.35" />
<line x1="409.8" y1="282.6" x2="410.6" y2="288.8" stroke="#000" stroke-width="1.35" />
<line x1="407.2" y1="282.7" x2="406.9" y2="289.0" stroke="#000" stroke-width="1.35" />
<line x1="404.7" y1="282.3" x2="403.3" y2="288.5" stroke="#000" stroke-width="1.35" />
<line x1="402.3" y1="281.5" x2="399.8" y2="287.3" stroke="#000" stroke-width="1.35" />
<line x1="400.0" y1="280.3" x2="396.6" y2="285.6" stroke="#000" stroke-width="1.35" />
<line x1="398.0" y1="278.8" x2="393.7" y2="283.4" stroke="#000" stroke-width="1.35" />
<line x1="396.3" y1="276.8" x2="391.2" y2="280.6" stroke="#000" stroke-width="1.35" />
<line x1="394.9" y1="274.7" x2="389.3" y2="277.5" stroke="#000" stroke-width="1.35" />
<line x1="393.9" y1="272.3" x2="387.9" y2="274.1" stroke="#000" stroke-width="1.35" />
<line x1="393.4" y1="269.8" x2="387.2" y2="270.6" stroke="#000" stroke-width="1.35" />
<line x1="393.3" y1="267.2" x2="387.0" y2="266.9" stroke="#000" stroke-width="1.35" />
<line x1="393.7" y1="264.7" x2="387.5" y2="263.3" stroke="#000" stroke-width="1.35" />
<line x1="394.5" y1="262.3" x2="388.7" y2="259.8" stroke="#000" stroke-width="1.35" />
<line x1="395.7" y1="260.0" x2="390.4" y2="256.6" stroke="#000" stroke-width="1.35" />
<line x1="397.2" y1="258.0" x2="392.6" y2="253.7" stroke="#000" stroke-width="1.35" />
<line x1="399.2" y1="256.3" x2="395.4" y2="251.2" stroke="#000" stroke-width="1.35" />
<line x1="401.3" y1="254.9" x2="398.5" y2="249.3" stroke="#000" stroke-width="1.35" />
<line x1="403.7" y1="253.9" x2="401.9" y2="247.9" stroke="#000" stroke-width="1.35" />
<line x1="406.2" y1="253.4" x2="405.4" y2="247.2" stroke="#000" stroke-width="1.35" />
<line x1="408.8" y1="253.3" x2="409.1" y2="247.0" stroke="#000" stroke-width="1.35" />
<line x1="411.3" y1="253.7" x2="412.7" y2="247.5" stroke="#000" stroke-width="1.35" />
<line x1="413.7" y1="254.5" x2="416.2" y2="248.7" stroke="#000" stroke-width="1.35" />
<line x1="416.0" y1="255.7" x2="419.4" y2="250.4" stroke="#000" stroke-width="1.35" />
<line x1="418.0" y1="257.2" x2="422.3" y2="252.6" stroke="#000" stroke-width="1.35" />
<line x1="419.7" y1="259.2" x2="424.8" y2="255.4" stroke="#000" stroke-width="1.35" />
<line x1="421.1" y1="261.3" x2="426.7" y2="258.5" stroke="#000" stroke-width="1.35" />
<line x1="422.1" y1="263.7" x2="428.1" y2="261.9" stroke="#000" stroke-width="1.35" />
<line x1="422.6" y1="266.2" x2="428.8" y2="265.4" stroke="#000" stroke-width="1.35" />
<line x1="408.0" y1="268.0" x2="417.9" y2="267.3" stroke="#000" stroke-width="1.3" />
<line x1="408.0" y1="268.0" x2="416.9" y2="272.7" stroke="#000" stroke-width="1.3" />
<line x1="408.0" y1="268.0" x2="411.9" y2="275.3" stroke="#000" stroke-width="1.3" />
<line x1="408.0" y1="268.0" x2="409.5" y2="278.8" stroke="#000" stroke-width="1.3" />
<line x1="408.0" y1="268.0" x2="404.1" y2="275.9" stroke="#000" stroke-width="1.3" />
<line x1="408.0" y1="268.0" x2="399.1" y2="271.6" stroke="#000" stroke-width="1.3" />
<line x1="408.0" y1="268.0" x2="398.4" y2="267.1" stroke="#000" stroke-width="1.3" />
<line x1="408.0" y1="268.0" x2="400.8" y2="263.5" stroke="#000" stroke-width="1.3" />
<line x1="408.0" y1="268.0" x2="402.8" y2="258.2" stroke="#000" stroke-width="1.3" />
<line x1="408.0" y1="268.0" x2="408.1" y2="257.4" stroke="#000" stroke-width="1.3" />
<line x1="408.0" y1="268.0" x2="412.4" y2="261.1" stroke="#000" stroke-width="1.3" />
<line x1="408.0" y1="268.0" x2="417.1" y2="263.6" stroke="#000" stroke-width="1.3" />
<circle cx="408" cy="268.5" r="2.2" fill="#000"/>
<g transform="translate(698.4,297)">
<path d="M3 0 H0 V53.3 H12 V0 H9" fill="none" stroke="#000" stroke-width="1.2"/>
<text transform="translate(8.6,52) rotate(-90)" font-size="5.3" font-style="italic" fill="#222" textLength="53" lengthAdjust="spacingAndGlyphs">Área común del edificio</text>
<text x="15" y="37" font-size="9" fill="#000" text-decoration="underline">Área</text>
<line x1="15" y1="38.4" x2="35" y2="38.4" stroke="#000" stroke-width="1"/>
<text x="15" y="48.8" font-size="9" font-style="italic" fill="#000">223.50 m²</text>
</g>
<g transform="translate(393.3,532)">
<rect x="4" y="-3" width="6" height="48" fill="#fff"/>
<rect x="14.5" y="28.5" width="22" height="10.5" fill="#fff"/>
<path d="M3 0 H0 V53.3 H12 V0 H9" fill="none" stroke="#000" stroke-width="1.2"/>
<text transform="translate(8.6,52) rotate(-90)" font-size="5.3" font-style="italic" fill="#222" textLength="53" lengthAdjust="spacingAndGlyphs">Área común del edificio</text>
<text x="15" y="37" font-size="9" fill="#000" text-decoration="underline">Área</text>
<line x1="15" y1="38.4" x2="35" y2="38.4" stroke="#000" stroke-width="1"/>
</g>
<line x1="617.5" y1="984.0" x2="615.5" y2="992.0" stroke="#000" stroke-width="1" />
<line x1="614.0" y1="984.0" x2="617.5" y2="984.0" stroke="#000" stroke-width="1" />
</svg>
<div id="hscroll" class="abs"></div>
<div id="thumb" class="abs"></div>
<div id="status" class="abs"></div>
<div class="abs" style="left:371px;top:1019px;width:204px;height:2px;background:#fff"></div>
<div class="abs" style="left:687.5px;top:1018.5px;width:204.5px;height:3px;background:#fff"></div>
<div class="abs" style="left:352.5px;top:1019px;width:4.5px;height:2px;background:#1e6b1e"></div>
<div class="abs" style="left:588px;top:1019px;width:9px;height:2px;background:#9a9a9a"></div>
<div class="abs" style="left:637px;top:1019px;width:15px;height:2px;background:#2a3450"></div>
<div class="abs" style="left:663px;top:1019px;width:16px;height:2px;background:#b2b2b2"></div>
<div id="menu" class="abs">
<div class="sep" style="top:27px"></div>
<div class="sep" style="top:78px"></div>
<div class="sep" style="top:129px"></div>
<div class="sep" style="top:246px"></div>
<div class="sep" style="top:275px"></div>
<div class="sep" style="top:348px"></div>
<div class="abs" style="left:2px;top:418px;width:22px;height:21.6px;background:#91c9f7"></div>
<svg class="abs" style="left:7px;top:423px" width="12" height="12" viewBox="0 0 12 12"><path d="M1.3 5.4 L5.3 9.5 L11.1 2.2" fill="none" stroke="#2a2a2a" stroke-width="1.3"/></svg>
<div class="mi" style="top:2px;letter-spacing:-0.316px">Cancelar</div>
<div class="mi" style="top:31px;letter-spacing:-0.064px">Repetir [Tabla de planificación/ Cantidades]</div>
<div class="mi" style="top:53px;letter-spacing:-0.148px">Comandos recientes</div>
<svg class="arr" style="top:58.5px" viewBox="0 0 8 10"><path d="M2.2 1.7 L6 5 L2.2 8.3" fill="none" stroke="#3a3a3a" stroke-width="1.15"/></svg>
<div class="mi" style="top:82px;letter-spacing:-0.136px">Ocultar en vista</div>
<svg class="arr" style="top:87.5px" viewBox="0 0 8 10"><path d="M2.2 1.7 L6 5 L2.2 8.3" fill="none" stroke="#3a3a3a" stroke-width="1.15"/></svg>
<div class="mi" style="top:104px;letter-spacing:-0.027px">Modificar gráficos en vista</div>
<svg class="arr" style="top:109.5px" viewBox="0 0 8 10"><path d="M2.2 1.7 L6 5 L2.2 8.3" fill="none" stroke="#3a3a3a" stroke-width="1.15"/></svg>
<div class="mi" style="top:133px;letter-spacing:-0.186px">Crear similar</div>
<div class="mi dis" style="top:155px;letter-spacing:-0.097px">Editar familia</div>
<div class="mi" style="top:177px;letter-spacing:-0.157px">Seleccionar anterior</div>
<div class="mi" style="top:199px;letter-spacing:-0.178px">Seleccionar todos los ejemplares</div>
<svg class="arr" style="top:204.5px" viewBox="0 0 8 10"><path d="M2.2 1.7 L6 5 L2.2 8.3" fill="none" stroke="#3a3a3a" stroke-width="1.15"/></svg>
<div class="mi" style="top:221px;letter-spacing:-0.034px">Suprimir</div>
<div class="mi" style="top:250px;letter-spacing:-0.286px">Buscar vistas de referencia</div>
<div class="mi" style="top:279px;letter-spacing:0.059px">Ampliar región</div>
<div class="mi" style="top:301px;letter-spacing:-0.288px">Reducir (2x)</div>
<div class="mi" style="top:323px;letter-spacing:-0.16px">Ajustar en ventana</div>
<div class="mi" style="top:352px;letter-spacing:-0.0px">Encuadre/Zoom anterior</div>
<div class="mi dis" style="top:374px;letter-spacing:-0.024px">Encuadre/Zoom siguiente</div>
<div class="mi" style="top:396px;letter-spacing:-0.281px">Navegadores</div>
<svg class="arr" style="top:401.5px" viewBox="0 0 8 10"><path d="M2.2 1.7 L6 5 L2.2 8.3" fill="none" stroke="#3a3a3a" stroke-width="1.15"/></svg>
<div class="mi" style="top:418px;letter-spacing:-0.263px">Propiedades</div>
</div>
<div class="abs" style="left:310px;top:792.5px;width:149px;height:25.2px;border:3.5px solid #fbec12"></div>
</div></body></html>
